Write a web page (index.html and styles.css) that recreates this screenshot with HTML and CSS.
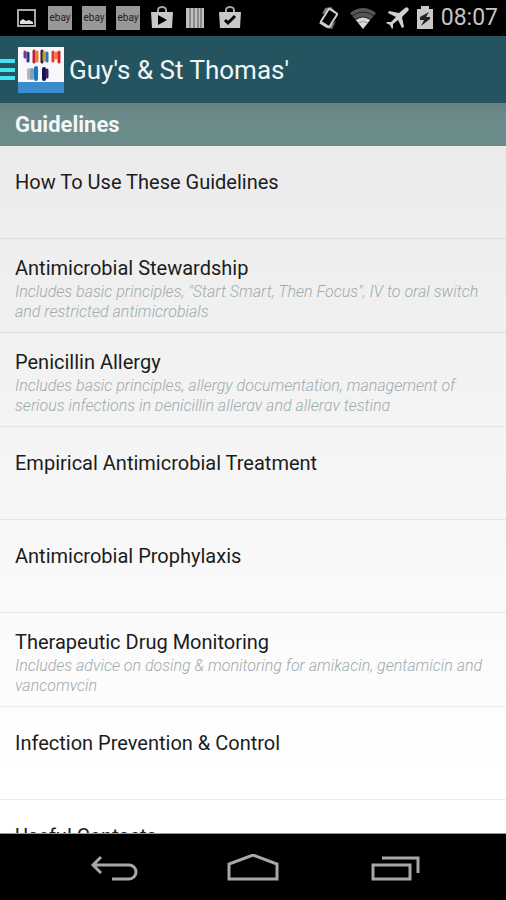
FILE: index.html
```html
<!DOCTYPE html>
<html lang="en">
<head>
<meta charset="utf-8">
<meta name="viewport" content="width=device-width, initial-scale=1">
<title>Guy's &amp; St Thomas' Guidelines</title>
<link rel="stylesheet" href="styles.css">
</head>
<body>
<div class="status">
  <div class="status-group notices">
    <svg class="glyph" viewBox="0 0 24 24"><rect x="4" y="4" width="17" height="16" fill="none" stroke="#a8a8a8" stroke-width="2"/><path d="M6 18v-3l3-2 3 2 3-1 4 2v2z" fill="#e0e0e0"/></svg>
    <span class="tile">ebay</span>
    <span class="tile">ebay</span>
    <span class="tile">ebay</span>
    <svg class="glyph" viewBox="0 0 24 24"><path d="M8 6V4a4 3 0 0 1 8 0v2" fill="none" stroke="#a4a4a4" stroke-width="2"/><path d="M1 6h22l-1 16H2z" fill="#c8c8c8"/><path d="M8 9l9 5-9 5z" fill="#000"/></svg>
    <svg class="glyph" viewBox="0 0 24 24"><path d="M2 2h18v20H2z" fill="#c0c0c0"/><path d="M6 2v20M10 2v20M14 2v20M17 2v20" stroke="#555"/></svg>
    <svg class="glyph" viewBox="0 0 24 24"><path d="M8 6V4a4 3 0 0 1 8 0v2" fill="none" stroke="#a4a4a4" stroke-width="2"/><path d="M1 6h22l-1 16H2z" fill="#c8c8c8"/><path d="M7 14l3 3 7-7" fill="none" stroke="#000" stroke-width="3"/></svg>
  </div>
  <div class="status-group">
    <svg class="glyph" viewBox="0 0 24 24"><path d="M5 8l3-6 6-1 4 4zM19 15l-4 8-5-1z" fill="#777"/><rect x="7" y="4" width="10" height="16" rx="1" transform="rotate(32 12 12)" fill="#000" stroke="#d0d0d0" stroke-width="2"/><path d="M3 16l8 5" stroke="#d0d0d0" stroke-width="3"/></svg>
    <svg class="glyph wide" viewBox="0 0 28 24"><path d="M1 7Q14-3 27 7L14 23z" fill="#555"/><path d="M3 10q11-8 22 0M6 14q8-6 16 0" fill="none" stroke="#222" stroke-width="1"/><path d="M7 14q7-5 14 0l-7 9z" fill="#d8d8d8"/><path d="M9 17q5-3 10 0" fill="none" stroke="#999"/></svg>
    <svg class="glyph" viewBox="0 0 24 24"><path d="M23 2c1 1 1 2 0 3l-6 6 2 10-2 1-4-8-5 4v4l-1 1-2-4-4-2 1-1h4l5-5-8-4 1-2 10 2 6-5c1-1 2-1 3 0z" fill="#d0d0d0"/></svg>
    <svg class="glyph slim" viewBox="0 0 16 24"><path d="M0 3h4V0h8v3h4v20H0z" fill="#c8c8c8"/><path d="M12 6l-9 5v3h4l-3 6 9-7v-2H9z" fill="#222"/></svg>
    <time class="clock">08:07</time>
  </div>
</div>
<header class="bar">
  <button class="menu" aria-label="Open menu"><svg viewBox="0 0 15 22"><path d="M0 2h15M0 11h15M0 19h15" stroke="#42e4f2" stroke-width="4"/></svg></button>
  <svg class="logo" viewBox="0 0 46 46"><path fill="#f8f8fa" d="M0 0h46v35H0z"/><path fill="#3c8bcc" d="M0 35h46v11H0z"/><g stroke-width="3" stroke-linecap="round"><path d="M7 5v5" stroke="#8a2c90"/><path d="M10 6v8" stroke="#273a9b"/><path d="M16 4v11" stroke="#b8203f"/><path d="M19 5v9" stroke="#f17c20"/><path d="M24 4v11" stroke="#252044"/><path d="M26 5v8" stroke="#d09a29"/><path d="M29 6v8" stroke="#2477b9"/><path d="M35 5v9" stroke="#ee3825"/><path d="M38 6v5" stroke="#ef7a38"/><path d="M41 5v10" stroke="#d8222c"/><path d="M11 23v8" stroke="#b3b7bd" stroke-width="4"/><path d="M14 23v8" stroke="#8c9eb1" stroke-width="4"/><path d="M18 21v11" stroke="#1676cf" stroke-width="4"/><path d="M26 22v10" stroke="#1a1450" stroke-width="4"/><path d="M29 23v7" stroke="#431d6d"/></g></svg>
  <h1 class="app-title">Guy's &amp; St Thomas'</h1>
</header>
<h2 class="section">Guidelines</h2>
<main class="list">
  <a class="row" href="#use"><span class="name">How To Use These Guidelines</span></a>
  <a class="row detailed" href="#stewardship"><span class="name">Antimicrobial Stewardship</span><span class="note">Includes basic principles, "Start Smart, Then Focus", IV to oral switch and restricted antimicrobials</span></a>
  <a class="row detailed" href="#allergy"><span class="name">Penicillin Allergy</span><span class="note">Includes basic principles, allergy documentation, management of serious infections in penicillin allergy and allergy testing</span></a>
  <a class="row" href="#empirical"><span class="name">Empirical Antimicrobial Treatment</span></a>
  <a class="row" href="#prophylaxis"><span class="name">Antimicrobial Prophylaxis</span></a>
  <a class="row detailed" href="#monitoring"><span class="name">Therapeutic Drug Monitoring</span><span class="note">Includes advice on dosing &amp; monitoring for amikacin, gentamicin and vancomycin</span></a>
  <a class="row" href="#infection"><span class="name">Infection Prevention &amp; Control</span></a>
  <a class="row" href="#contacts"><span class="name">Useful Contacts</span></a>
</main>
<nav class="keys">
  <button class="key" aria-label="Back"><svg viewBox="0 0 54 32"><path d="M17 3L9 11l8 8M9 11h36a7 7 0 0 1 0 14H28" fill="none" stroke="#a8a8a8" stroke-width="3"/></svg></button>
  <button class="key" aria-label="Home"><svg viewBox="0 0 54 32"><path d="M3 25V10L27 1l24 9v15z" fill="none" stroke="#a8a8a8" stroke-width="3"/></svg></button>
  <button class="key" aria-label="Recent apps"><svg viewBox="0 0 54 32"><path d="M5 11h37v14H5zM14 4h36v15" fill="none" stroke="#a8a8a8" stroke-width="3"/></svg></button>
</nav>
</body>
</html>
```
FILE: styles.css
```css
* { box-sizing: border-box; }

body {
  margin: 0;
  height: 100vh;
  display: flex;
  flex-direction: column;
  background: #000;
  font-family: Roboto, "Liberation Sans", sans-serif;
}

button {
  padding: 0;
  border: 0;
  background: none;
}

svg { display: block; }

.status {
  flex: none;
  height: 36px;
  display: flex;
  justify-content: space-between;
  align-items: center;
  padding: 0 8px 0 14px;
  color: #c4c4c4;
}

.status-group {
  display: flex;
  align-items: center;
  gap: 8px;
}

.notices { gap: 10px; }

.glyph { width: 24px; height: 24px; }
.wide { width: 28px; }
.slim { width: 16px; }

.tile {
  width: 24px;
  height: 24px;
  background: #989898;
  color: #222;
  font-size: 10px;
  line-height: 24px;
  text-align: center;
}

.clock { font-size: 23px; line-height: 36px; }

.bar {
  flex: none;
  height: 67px;
  display: flex;
  align-items: center;
  background: #24545f;
  color: #f0f6f7;
}

.menu { width: 15px; height: 22px; margin-right: 3px; }
.logo { width: 46px; height: 46px; margin-right: 5px; }

.app-title {
  margin: 0;
  font-size: 26px;
  line-height: 32px;
  font-weight: 400;
}

.section {
  flex: none;
  margin: 0;
  padding: 0 15px;
  background: linear-gradient(#64807f, #6b8b8a 30%);
  color: #f4f7f7;
  font-size: 22px;
  line-height: 43px;
  font-weight: 700;
}

.list {
  flex: 1;
  min-height: 0;
  overflow: hidden;
  background: linear-gradient(#ebebeb, #fff 90%);
  border-bottom: 1px solid #999;
}

.row {
  display: block;
  height: 93px;
  padding: 23px 15px 0;
  border-bottom: 1px solid rgba(0, 0, 0, 0.07);
  color: #1c1c1c;
  text-decoration: none;
}

.detailed { height: 94px; padding-top: 16px; }

.name {
  display: block;
  font-size: 20px;
  line-height: 26px;
}

.note {
  display: block;
  height: 35px;
  margin-top: 1px;
  overflow: hidden;
  color: #a0abae;
  font-size: 16px;
  line-height: 20px;
  font-style: italic;
  font-weight: 300;
}

.keys {
  flex: none;
  height: 66px;
  display: flex;
  justify-content: center;
  align-items: center;
  gap: 88px;
  padding-top: 5px;
}

.key svg { width: 54px; height: 32px; }
```
